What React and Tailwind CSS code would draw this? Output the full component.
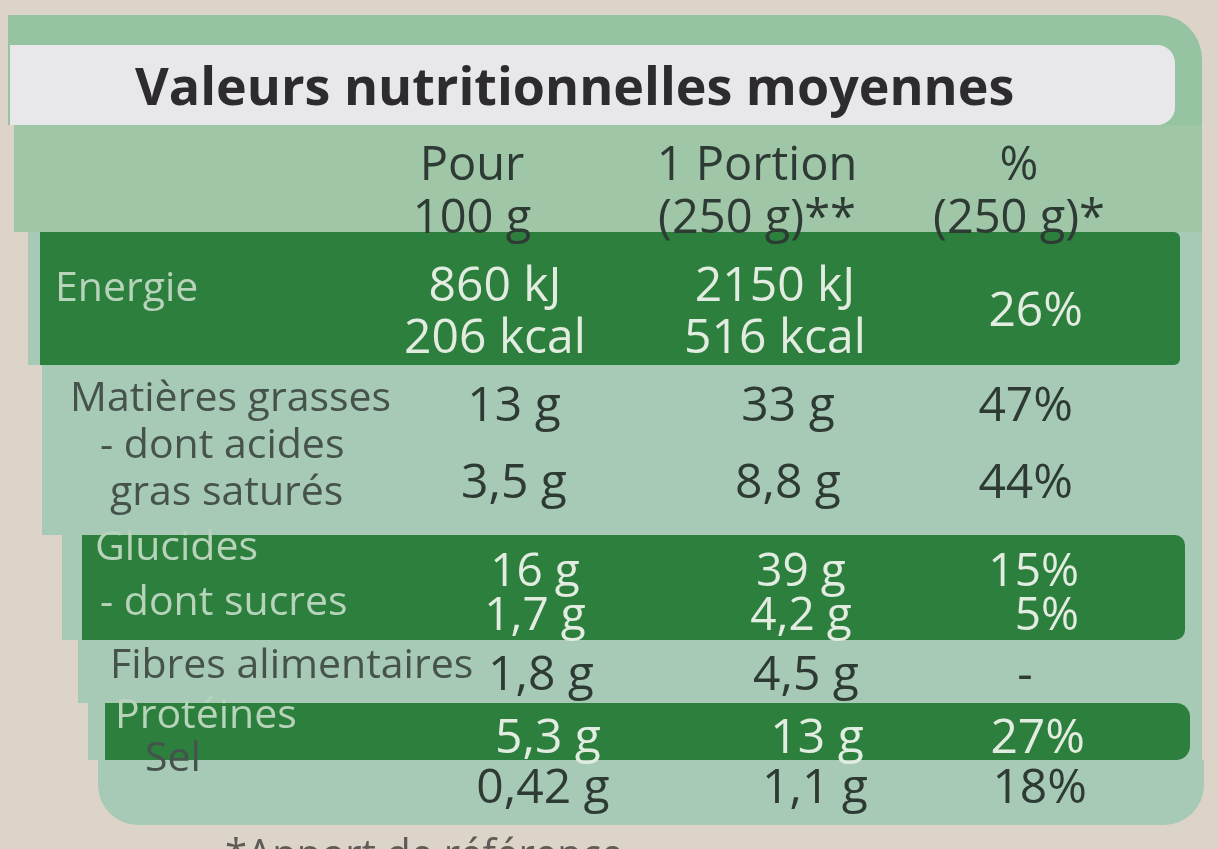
import React from 'react';

const light = 'bg-[#a6cab5]';
const band = 'bg-[#2c7f3c]';
const darkText = 'text-[#2e3a34]';
const labelDark = 'text-[#46534c]';
const bandVal = 'text-[#e3ece1]';
const bandLabel = 'text-[#b7d3ba]';

export default function App() {
  return (
    <div className="h-[849px] w-full overflow-hidden bg-[#ddd4c9] pt-[15px] font-['Open_Sans',sans-serif] blur-[0.6px]">
      {/* title strip */}
      <div className="ml-[8px] mr-[16px] rounded-tr-[44px] bg-[#96c3a2] pt-[30px]">
        <div className="ml-[2px] mr-[27px] flex h-[80px] items-center rounded-r-[18px] bg-[#e8e8eb] pl-[125px]">
          <span className="text-[52px] font-bold text-[#2e2b2f] whitespace-nowrap">
            Valeurs nutritionnelles moyennes
          </span>
        </div>
      </div>

      {/* column headings */}
      <div className={`ml-[14px] mr-[16px] h-[107px] bg-[#a0c6a8] grid grid-cols-[343px_230px_340px_184px] pt-[11px] text-[47px] leading-[53px] text-center ${darkText}`}>
        <div />
        <div>
          <div>Pour</div>
          <div>100 g</div>
        </div>
        <div>
          <div>1 Portion</div>
          <div className="whitespace-nowrap">(250 g)**</div>
        </div>
        <div>
          <div>%</div>
          <div className="whitespace-nowrap">(250 g)*</div>
        </div>
      </div>

      {/* Energie */}
      <div className={`ml-[28px] mr-[16px] h-[133px] ${light}`}>
        <div className={`ml-[12px] mr-[22px] h-full rounded-r-[6px] ${band} grid grid-cols-[340px_230px_330px_143px] text-[48px] ${bandVal}`}>
          <div className={`pl-[15px] pt-[29px] text-[41px] leading-[48px] ${bandLabel}`}>Energie</div>
          <div className="pt-[25px] leading-[52px] text-center whitespace-nowrap">
            <div>860 kJ</div>
            <div>206 kcal</div>
          </div>
          <div className="pt-[25px] leading-[52px] text-center whitespace-nowrap">
            <div>2150 kJ</div>
            <div>516 kcal</div>
          </div>
          <div className="pt-[52px] leading-[48px] text-right">26%</div>
        </div>
      </div>

      {/* Matières grasses */}
      <div className={`ml-[42px] mr-[16px] h-[170px] ${light} grid grid-cols-[357px_230px_318px_126px] text-[48px] ${darkText}`}>
        <div className={`pl-[28px] pt-[7px] text-[41px] leading-[47px] whitespace-nowrap ${labelDark}`}>
          <div>Matières grasses</div>
          <div className="pl-[30px]">- dont acides</div>
          <div className="pl-[40px]">gras saturés</div>
        </div>
        <div className="flex flex-col gap-[29px] pt-[14px] leading-[48px] text-center">
          <div>13 g</div>
          <div>3,5 g</div>
        </div>
        <div className="flex flex-col gap-[29px] pt-[14px] leading-[48px] text-center">
          <div>33 g</div>
          <div>8,8 g</div>
        </div>
        <div className="flex flex-col gap-[29px] pt-[14px] leading-[48px] text-right">
          <div>47%</div>
          <div>44%</div>
        </div>
      </div>

      {/* Glucides */}
      <div className={`ml-[62px] mr-[16px] h-[105px] ${light}`}>
        <div className={`ml-[20px] mr-[17px] h-full rounded-r-[10px] ${band} grid grid-cols-[338px_230px_302px_127px] text-[46px] ${bandVal}`}>
          <div className={`-mt-[18px] pl-[13px] text-[41px] leading-[55px] whitespace-nowrap ${bandLabel}`}>
            <div>Glucides</div>
            <div className="pl-[5px]">- dont sucres</div>
          </div>
          <div className="pt-[11px] leading-[44px] text-center">
            <div>16 g</div>
            <div>1,7 g</div>
          </div>
          <div className="pt-[11px] leading-[44px] text-center">
            <div>39 g</div>
            <div>4,2 g</div>
          </div>
          <div className="pt-[11px] leading-[44px] text-right">
            <div>15%</div>
            <div>5%</div>
          </div>
        </div>
      </div>

      {/* Fibres */}
      <div className={`ml-[78px] mr-[16px] h-[63px] ${light} grid grid-cols-[348px_230px_300px_138px] text-[48px] ${darkText}`}>
        <div className={`-mt-[2px] pl-[32px] text-[41px] leading-[48px] whitespace-nowrap ${labelDark}`}>Fibres alimentaires</div>
        <div className="pt-[8px] leading-[48px] text-center">1,8 g</div>
        <div className="pt-[8px] leading-[48px] text-center">4,5 g</div>
        <div className="pt-[8px] leading-[48px] text-center">-</div>
      </div>

      {/* Protéines */}
      <div className={`ml-[88px] mr-[16px] h-[57px] ${light}`}>
        <div className={`ml-[17px] mr-[12px] h-full rounded-r-[14px] ${band} grid grid-cols-[328px_230px_308px_114px] text-[48px] ${bandVal}`}>
          <div className={`-mt-[15px] pl-[10px] text-[41px] leading-[48px] whitespace-nowrap ${bandLabel}`}>Protéines</div>
          <div className="pt-[8px] leading-[48px] text-center">5,3 g</div>
          <div className="pt-[8px] leading-[48px] text-center">13 g</div>
          <div className="pt-[8px] leading-[48px] text-right">27%</div>
        </div>
      </div>

      {/* Sel */}
      <div className={`ml-[98px] mr-[14px] h-[65px] rounded-b-[40px] ${light} grid grid-cols-[330px_230px_314px_115px] text-[48px] ${darkText}`}>
        <div className={`-mt-[29px] pl-[47px] text-[41px] leading-[48px] ${labelDark}`}>Sel</div>
        <div className="pt-[1px] leading-[48px] text-center">0,42 g</div>
        <div className="pt-[1px] leading-[48px] text-center">1,1 g</div>
        <div className="pt-[1px] leading-[48px] text-right">18%</div>
      </div>

      {/* footnote */}
      <div className="pl-[225px] pt-[4px] text-[40px] leading-[48px] text-[#5f5b56] whitespace-nowrap">
        *Apport de référence
      </div>
    </div>
  );
}
